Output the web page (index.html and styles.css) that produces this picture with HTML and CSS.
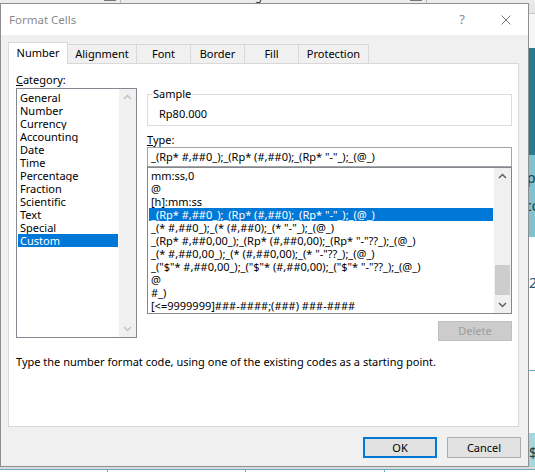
FILE: index.html
```html
<!DOCTYPE html>
<html>
<head>
<meta charset="utf-8">
<title>Format Cells</title>
<link rel="stylesheet" href="styles.css">
</head>
<body>
<div class="screen">
  <div class="bg-top">
    <div class="bg-top-inner">
      <span class="bt-cell bt-a">Font</span><span class="bt-drop"></span>
      <span class="bt-cell bt-b">Alignment</span><span class="bt-drop"></span>
      <span class="bt-cell bt-c">Number</span>
    </div>
  </div>
  <div class="mid">
    <div class="dialog">
      <div class="titlebar">
        <span class="title">Format Cells</span>
        <span class="help">?</span>
        <svg class="close" width="10" height="10" viewBox="0 0 10 10"><path d="M0.5 0.5 L9.5 9.5 M9.5 0.5 L0.5 9.5" stroke="#7a7a7a" stroke-width="1" fill="none"/></svg>
      </div>
      <div class="body">
        <div class="tabs">
          <div class="tab sel w-number">Number</div>
          <div class="tab w-align">Alignment</div>
          <div class="tab w-font">Font</div>
          <div class="tab w-border">Border</div>
          <div class="tab w-fill">Fill</div>
          <div class="tab w-prot">Protection</div>
        </div>
        <div class="panel">
          <div class="cols">
            <div class="leftcol">
              <div class="label cat-label"><u>C</u>ategory:</div>
              <div class="catlist">
                <div class="items">
                  <div class="item">General</div>
                  <div class="item">Number</div>
                  <div class="item">Currency</div>
                  <div class="item">Accounting</div>
                  <div class="item">Date</div>
                  <div class="item">Time</div>
                  <div class="item">Percentage</div>
                  <div class="item">Fraction</div>
                  <div class="item">Scientific</div>
                  <div class="item">Text</div>
                  <div class="item">Special</div>
                  <div class="item sel">Custom</div>
                </div>
                <div class="vscroll">
                  <svg class="arrow" width="17" height="17" viewBox="0 0 17 17"><polyline points="5,10 8.5,6.5 12,10" stroke="#c2c2c2" stroke-width="1.5" fill="none"/></svg>
                  <svg class="arrow" width="17" height="17" viewBox="0 0 17 17"><polyline points="5,7 8.5,10.5 12,7" stroke="#c2c2c2" stroke-width="1.5" fill="none"/></svg>
                </div>
              </div>
            </div>
            <div class="rightcol">
              <div class="group">
                <span class="legend">Sample</span>
                <div class="sample">Rp80.000</div>
              </div>
              <div class="label type-label"><u>T</u>ype:</div>
              <div class="input">_(Rp* #,##0_);_(Rp* (#,##0);_(Rp* "-"_);_(@_)</div>
              <div class="fmtlist">
                <div class="items">
                  <div class="item">mm:ss,0</div>
                  <div class="item">@</div>
                  <div class="item">[h]:mm:ss</div>
                  <div class="item sel">_(Rp* #,##0_);_(Rp* (#,##0);_(Rp* "-"_);_(@_)</div>
                  <div class="item">_(* #,##0_);_(* (#,##0);_(* "-"_);_(@_)</div>
                  <div class="item">_(Rp* #,##0,00_);_(Rp* (#,##0,00);_(Rp* "-"??_);_(@_)</div>
                  <div class="item">_(* #,##0,00_);_(* (#,##0,00);_(* "-"??_);_(@_)</div>
                  <div class="item">_("$"* #,##0,00_);_("$"* (#,##0,00);_("$"* "-"??_);_(@_)</div>
                  <div class="item">@</div>
                  <div class="item">#_)</div>
                  <div class="item">[&lt;=9999999]###-####;(###) ###-####</div>
                </div>
                <div class="vscroll">
                  <svg class="arrow" width="17" height="17" viewBox="0 0 17 17"><polyline points="5,10 8.5,6.5 12,10" stroke="#606060" stroke-width="1.5" fill="none"/></svg>
                  <div class="track"><div class="thumb"></div></div>
                  <svg class="arrow" width="17" height="17" viewBox="0 0 17 17"><polyline points="5,7 8.5,10.5 12,7" stroke="#606060" stroke-width="1.5" fill="none"/></svg>
                </div>
              </div>
              <div class="delrow"><div class="btn btn-disabled">Delete</div></div>
            </div>
          </div>
          <div class="desc">Type the number format code, using one of the existing codes as a starting point.</div>
        </div>
        <div class="buttons">
          <div class="btn btn-ok">OK</div>
          <div class="btn">Cancel</div>
        </div>
      </div>
    </div>
    <div class="side">
      <div class="band b1"></div>
      <div class="band b2"></div>
      <div class="band b3"></div>
      <div class="band b4"><span class="sg sg-p">p</span><span class="sg sg-co">co</span></div>
      <div class="band b5"><span class="sg sg-2">2</span></div>
      <div class="band b6"></div>
      <div class="band b7"><span class="sg sg-d">$</span></div>
    </div>
  </div>
  <div class="bg-bottom">
    <div class="bb-cell bb1"></div>
    <div class="bb-cell bb2"></div>
    <div class="bb-cell bb3"></div>
    <div class="bb-cell bb4"></div>
  </div>
</div>
</body>
</html>
```

FILE: styles.css
```css
* { box-sizing: border-box; }
html, body { margin: 0; padding: 0; }
body {
  width: 535px;
  height: 472px;
  overflow: hidden;
  background: #ffffff;
  font-family: "Noto Sans", "Open Sans", sans-serif;
  font-size: 11px;
  color: #000;
}
.screen {
  width: 535px;
  height: 472px;
  display: flex;
  flex-direction: column;
  overflow: hidden;
}

/* background spreadsheet fragments */
.bg-top {
  height: 3px;
  background: #ececec;
  overflow: hidden;
  flex: none;
}
.bg-top-inner {
  display: flex;
  height: 14px;
  margin-top: -11px;
  line-height: 14px;
  color: #444;
  font-size: 12px;
}
.bt-cell { display: block; }
.bt-a { width: 104px; padding-left: 6px; }
.bt-b { width: 290px; padding-left: 120px; border-left: 1px solid #bdbdbd; }
.bt-c { flex: 1; padding-left: 45px; border-left: 1px solid #bdbdbd; }
.bt-drop { width: 12px; border-bottom: 2px solid #777; height: 12px; margin-right: 4px; }

.mid {
  display: flex;
  height: 464px;
  flex: none;
}

.dialog {
  width: 529px;
  height: 464px;
  flex: none;
  border: 1px solid #8f8f8f;
  background: #f0f0f0;
  display: flex;
  flex-direction: column;
}
.titlebar {
  height: 31px;
  background: #ffffff;
  display: flex;
  align-items: center;
  padding-right: 17px;
  flex: none;
}
.title {
  padding-left: 8px;
  color: #8a8a8a;
  font-size: 11.5px;
}
.help {
  margin-left: auto;
  width: 20px;
  text-align: center;
  color: #8a8a8a;
  font-size: 13px;
  margin-top: -1px;
}
.close {
  margin-left: 29px;
  display: block;
}

.body {
  padding: 7px 0 0 7px;
  flex: 1;
}
.tabs {
  display: flex;
  align-items: flex-end;
  height: 21px;
}
.tab {
  height: 19px;
  border: 1px solid #d9d9d9;
  border-bottom: none;
  background: #f0f0f0;
  margin-left: -1px;
  text-align: center;
  line-height: 17px;
}
.tab.sel {
  height: 22px;
  background: #ffffff;
  margin-left: 0;
  margin-bottom: -1px;
  position: relative;
  z-index: 1;
  line-height: 20px;
}
.w-number { width: 60px; }
.w-align { width: 70px; }
.w-font { width: 55px; }
.w-border { width: 55px; }
.w-fill { width: 55px; }
.w-prot { width: 71px; }

.panel {
  width: 511px;
  height: 364px;
  border: 1px solid #d9d9d9;
  background: #ffffff;
  padding-left: 7px;
}
.cols {
  display: flex;
  gap: 10px;
}
.leftcol { width: 121px; flex: none; }
.rightcol { width: 365px; flex: none; }

.label { line-height: 15px; }
.cat-label { padding-top: 8px; height: 23px; }

.catlist {
  margin-top: 1px;
  height: 250px;
  border: 1px solid #828790;
  display: flex;
}
.items {
  flex: 1;
  min-width: 0;
  overflow: hidden;
}
.catlist .items { padding-top: 2px; }
.fmtlist .items { padding-top: 1px; }
.item {
  height: 13px;
  line-height: 13px;
  margin: 0 1px;
  padding-left: 2px;
  white-space: nowrap;
  overflow: hidden;
}
.item.sel {
  background: #0078d7;
  color: #ffffff;
}
.vscroll {
  width: 17px;
  flex: none;
  background: #f0f0f0;
  display: flex;
  flex-direction: column;
  justify-content: space-between;
}
.arrow { display: block; flex: none; }
.track {
  flex: 1;
  display: flex;
  flex-direction: column;
  justify-content: flex-end;
  padding: 0 1px 1px 1px;
}
.thumb {
  height: 30px;
  background: #cdcdcd;
}

.group {
  margin-top: 30px;
  height: 32px;
  border: 1px solid #dcdcdc;
  padding: 12px 0 0 11px;
  position: relative;
}
.legend {
  position: absolute;
  top: -8px;
  left: 4px;
  padding: 0 1px;
  background: #ffffff;
  line-height: 13px;
}
.sample { line-height: 13px; }
.type-label {
  margin-top: 7px;
  line-height: 13px;
}
.input {
  margin-top: 1px;
  height: 20px;
  border: 1px solid #a5a5a5;
  padding-left: 3px;
  line-height: 18px;
  white-space: nowrap;
  overflow: hidden;
}
.fmtlist {
  height: 147px;
  border: 1px solid #828790;
  display: flex;
}
.delrow {
  margin-top: 7px;
  display: flex;
  justify-content: flex-end;
}
.btn {
  width: 74px;
  height: 21px;
  border: 1px solid #adadad;
  background: #e1e1e1;
  text-align: center;
  line-height: 19px;
}
.btn-disabled {
  height: 20px;
  line-height: 18px;
  background: #cccccc;
  border-color: #bfbfbf;
  color: #9d9d9d;
}
.btn-ok {
  border: 2px solid #0078d7;
  line-height: 17px;
}
.desc {
  margin-top: 14px;
  line-height: 13px;
  white-space: nowrap;
}
.buttons {
  margin-top: 10px;
  display: flex;
  justify-content: flex-end;
  gap: 10px;
  padding-right: 7px;
}

/* right strip of the sheet behind */
.side {
  flex: 1;
  display: flex;
  flex-direction: column;
  overflow: hidden;
}
.band { flex: none; overflow: hidden; position: relative; }
.b1 { height: 11px; background: #e6e6e6; border-bottom: 1px solid #c6c6c6; }
.b2 { height: 34px; background: #f6f6f6; }
.b3 { height: 107px; background: #2b7a8c; }
.b4 { height: 82px; background: #7fc3d1; color: #1d3b44; line-height: 13px; }
.b5 { height: 134px; background: #ffffff; border-bottom: 1px solid #5fa9b8; color: #24587a; }
.b6 { height: 62px; background: #ffffff; }
.b7 { flex: 1; background: #a6d6e0; color: #1d3b44; }
.sg { display: block; font-size: 14px; line-height: 14px; margin-left: -2px; }
.sg-p { margin-top: 16px; }
.sg-co { margin-top: 14px; margin-left: -4px; }
.sg-2 { margin-top: 39px; margin-left: 0; }
.sg-d { margin-top: 13px; margin-left: 0; }

/* bottom strip */
.bg-bottom {
  flex: 1;
  display: flex;
  background: #ffffff;
  border-top: 2px solid #dadada;
}
.bb-cell {
  height: 100%;
  border-top: 1px solid #6aaebe;
  border-right: 1px solid #6aaebe;
}
.bb1 { width: 108px; }
.bb2 { width: 138px; }
.bb3 { width: 139px; }
.bb4 { flex: 1; border-right: none; }
```
